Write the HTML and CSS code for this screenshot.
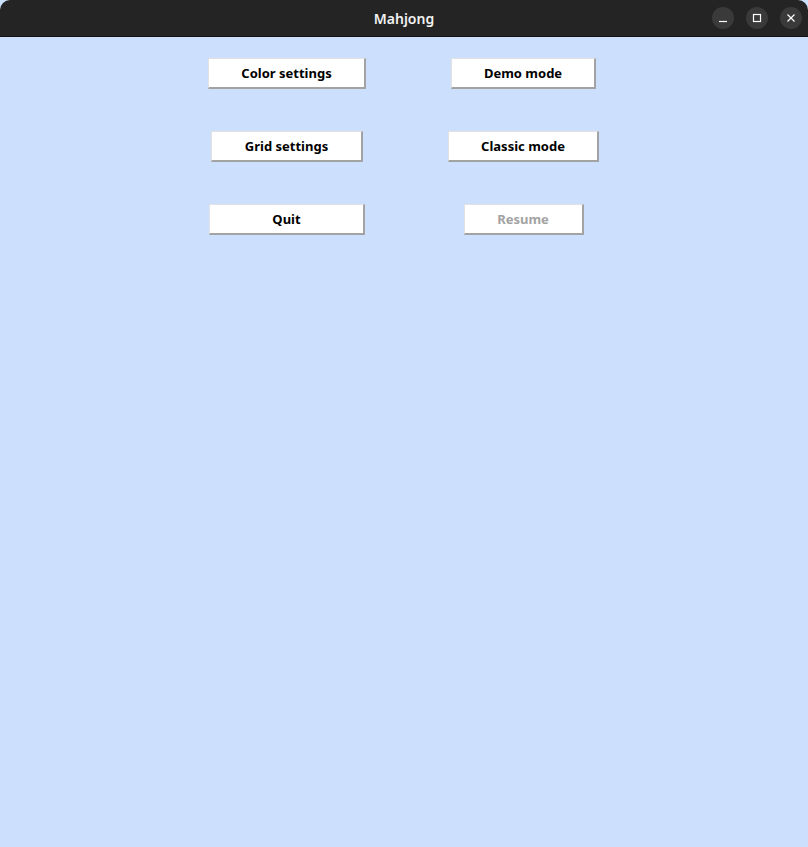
FILE: index.html
```html
<!DOCTYPE html>
<html>
<head>
<meta charset="utf-8">
<link rel="stylesheet" href="styles.css">
</head>
<body>
<div class="window">
  <header class="titlebar">
    <div class="title">Mahjong</div>
    <div class="controls">
      <span class="ctl"><svg width="10" height="10" viewBox="0 0 10 10"><line x1="1" y1="8.5" x2="9" y2="8.5" stroke="#fff" stroke-width="1.2"/></svg></span>
      <span class="ctl"><svg width="10" height="10" viewBox="0 0 10 10"><rect x="1.5" y="1.5" width="7" height="7" fill="none" stroke="#fff" stroke-width="1.2"/></svg></span>
      <span class="ctl"><svg width="10" height="10" viewBox="0 0 10 10"><path d="M1.5 1.5 L8.5 8.5 M8.5 1.5 L1.5 8.5" stroke="#fff" stroke-width="1.2"/></svg></span>
    </div>
  </header>
  <main class="content">
    <div class="menu">
      <div class="cell"><button class="btn btn-color">Color settings</button></div>
      <div class="cell"><button class="btn btn-demo">Demo mode</button></div>
      <div class="cell"><button class="btn btn-grid">Grid settings</button></div>
      <div class="cell"><button class="btn btn-classic">Classic mode</button></div>
      <div class="cell"><button class="btn btn-quit">Quit</button></div>
      <div class="cell"><button class="btn btn-resume disabled">Resume</button></div>
    </div>
  </main>
</div>
</body>
</html>
```
FILE: styles.css
```css
html, body {
  margin: 0;
  padding: 0;
  background: #cce0fe;
}
.window {
  width: 808px;
  height: 847px;
  display: flex;
  flex-direction: column;
  background: #cce0fe;
}
.titlebar {
  height: 36px;
  background: #242424;
  border-bottom: 1px solid #121212;
  border-radius: 10px 10px 0 0;
  display: flex;
  align-items: center;
  justify-content: center;
  position: relative;
}
.title {
  color: #f2f2f2;
  font-family: "Noto Sans", "Open Sans", sans-serif;
  font-weight: 600;
  font-size: 14px;
  padding-top: 0;
}
.controls {
  position: absolute;
  right: 6px;
  top: 7px;
  display: flex;
  gap: 12px;
}
.ctl {
  width: 22px;
  height: 22px;
  border-radius: 50%;
  background: #3a3a3a;
  display: flex;
  align-items: center;
  justify-content: center;
}
.content {
  flex: 1;
  display: flex;
  justify-content: flex-start;
  padding-top: 21px;
  padding-left: 207px;
}
.menu {
  display: grid;
  grid-template-columns: 160px 161px;
  grid-auto-rows: 31px;
  column-gap: 76px;
  row-gap: 42px;
  align-content: start;
}
.cell {
  display: flex;
  justify-content: center;
}
.btn {
  height: 31px;
  margin: 0;
  padding: 0;
  white-space: nowrap;
  background: #ffffff;
  border-top: 1px solid #e2e2e2;
  border-left: 1px solid #e2e2e2;
  border-right: 2px solid #a3a3a3;
  border-bottom: 2px solid #a3a3a3;
  font-family: "Noto Sans", "Open Sans", sans-serif;
  font-weight: 700;
  font-size: 13px;
  color: #000;
  box-sizing: border-box;
}
.btn-color { width: 158px; }
.btn-demo { width: 145px; }
.btn-grid { width: 152px; }
.btn-classic { width: 151px; }
.btn-quit { width: 156px; }
.btn-resume { width: 120px; }
.btn.disabled {
  color: #a3a3a3;
}
```
